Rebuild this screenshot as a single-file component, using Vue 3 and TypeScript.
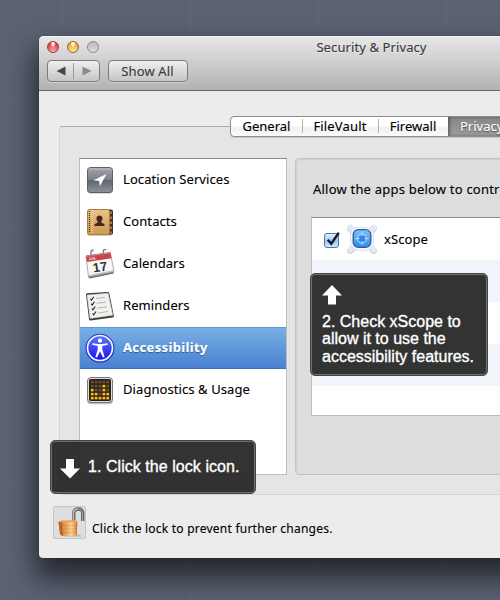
<script setup lang="ts">
interface Service {
  id: string
  label: string
}

const tabs: string[] = ['General', 'FileVault', 'Firewall', 'Privacy']
const activeTab = 'Privacy'

const services: Service[] = [
  { id: 'location', label: 'Location Services' },
  { id: 'contacts', label: 'Contacts' },
  { id: 'calendars', label: 'Calendars' },
  { id: 'reminders', label: 'Reminders' },
  { id: 'accessibility', label: 'Accessibility' },
  { id: 'diagnostics', label: 'Diagnostics & Usage' },
]
const selected = 'accessibility'

// Lit cells per row of the diagnostics display, top to bottom.
const litCells: number[][] = [
  [],
  [3],
  [0, 3],
  [0, 1, 3, 4],
  [0, 1, 2, 3, 4],
]
</script>

<template>
  <main class="desktop">
    <section class="window">
      <header class="toolbar">
        <div class="titlebar">
          <div class="lights">
            <i class="light red"></i><i class="light yellow"></i><i class="light off"></i>
          </div>
          <h1 class="title">Security &amp; Privacy</h1>
        </div>
        <div class="buttons">
          <div class="nav">
            <span class="nav-cell"><svg width="10" height="10" viewBox="0 0 10 10"><path d="M9.500 .5v9L.5 5z" fill="#474747" /></svg></span>
            <span class="nav-cell"><svg width="10" height="10" viewBox="0 0 10 10"><path d="M.5 .5v9l9-4.500z" fill="#8c8c8c" /></svg></span>
          </div>
          <button class="show-all">Show All</button>
        </div>
      </header>

      <div class="pane">
        <nav class="tabs">
          <span v-for="t in tabs" :key="t" class="tab" :class="[t.toLowerCase(), { active: t === activeTab }]">{{ t }}</span>
        </nav>
        <div class="columns">
          <ul class="services">
            <li v-for="s in services" :key="s.id" class="service" :class="{ selected: s.id === selected }">
              <svg v-if="s.id === 'location'" class="icon" viewBox="0 0 30 30">
                <defs>
                  <linearGradient id="loc" x2="0" y2="1"><stop offset="0" stop-color="#a3a6ab" /><stop offset=".5" stop-color="#7b7f86" /><stop offset=".52" stop-color="#60656e" /><stop offset="1" stop-color="#8d9199" /></linearGradient>
                </defs>
                <rect x="2" y="2.8" width="26" height="26" rx="3.5" fill="#000" opacity=".2" />
                <rect x="2.5" y="2.5" width="25" height="25" rx="3" fill="url(#loc)" stroke="#5d6066" />
                <path d="M3.5 4h23" stroke="#c9cbce" opacity=".7" />
                <path d="M21.5 9 8.5 15.2l5.6.8.8 5.3z" fill="#fff" />
              </svg>
              <svg v-else-if="s.id === 'contacts'" class="icon" viewBox="0 0 30 30">
                <defs><linearGradient id="con" x2="0" y2="1"><stop offset="0" stop-color="#e7c48a" /><stop offset="1" stop-color="#cf9a4e" /></linearGradient></defs>
                <rect x="2" y="2.8" width="26" height="26" rx="2.5" fill="#000" opacity=".25" />
                <rect x="22" y="2.5" width="6" height="25" rx="2" fill="#4b2f1c" />
                <path d="M26 4.500v22" stroke="#a5794a" stroke-width="2" stroke-dasharray="2.500 2.500" />
                <rect x="2.5" y="2.5" width="22" height="25" rx="2" fill="url(#con)" stroke="#a87a3c" />
                <path d="M4.5 4v22" stroke="#4d3417" stroke-width="1.300" stroke-dasharray="1 1" />
                <path d="M7 3v24" stroke="#efd5a6" stroke-width=".8" />
                <path d="M9.500 19v-1.500c0-1.200 3.400-1.200 3.400-2.600-2.300-2.600-1.800-6.400 1.600-6.400s3.900 3.800 1.600 6.400c0 1.400 3.400 1.400 3.400 2.600V19z" fill="#4b2717" />
              </svg>
              <svg v-else-if="s.id === 'calendars'" class="icon" viewBox="0 0 30 30">
                <path d="M3 27.500 28.500 22.800V24.500L4.500 29.500z" fill="#555" />
                <path d="M1 7 25.300 3.600 29 22.500 3.500 27.800z" fill="#f8f8f8" stroke="#8b8b8b" stroke-width=".7" />
                <path d="M4 28.300 28.700 23.300M3.600 26.800 28 21.700" stroke="#a5a5a5" stroke-width=".7" />
                <path d="M.8 6.800 25.300 3.300 26.600 9.300 2 13z" fill="#cf4148" />
                <path d="M1 7.200 25.300 3.800" stroke="#e68286" />
                <text x="3.700" y="11.200" class="cal-month" transform="rotate(-8 4 11)">JUL</text>
                <path d="M6 9.500V2.300q1.300-2.200 2.400 0M18.500 7.800V1.300q1.300-2.200 2.400 0" stroke="#777" stroke-width="1.300" fill="none" />
                <text x="8.500" y="23.500" class="cal-day" transform="rotate(-9 9 24)">17</text>
              </svg>
              <svg v-else-if="s.id === 'reminders'" class="icon" viewBox="0 0 30 30">
                <path d="M1 3.600Q1 2.400 2.200 2.200L22.500.900Q24 .8 24.300 2.200L28.900 25Q29.100 26.400 27.500 26.600L5.700 29.500Q4.300 29.600 4 28.300z" fill="#393939" />
                <path d="M2 4 23.200 2.200 27.800 24.300 5.100 27.400z" fill="#f1f1ed" stroke="#c9c9c9" stroke-width=".6" />
                <path d="M11 7.500 20 6.500M11.700 12.300 21 11.100M12.400 17.100 22 15.800M13.200 22 23 20.500" stroke="#b5b5b5" stroke-width="1" />
                <path d="m5.300 7.800 1.200 1.300 2.300-3.300M6 12.700l1.200 1.300 2.300-3.300M6.700 17.500l1.200 1.300 2.300-3.300M7.500 22.500l1.200 1.300 2.300-3.300" stroke="#222" stroke-width="1.100" fill="none" />
              </svg>
              <svg v-else-if="s.id === 'accessibility'" class="icon" viewBox="0 0 30 30">
                <defs><linearGradient id="acc" x2="0" y2="1"><stop offset="0" stop-color="#5d7bf5" /><stop offset="1" stop-color="#1a0df0" /></linearGradient></defs>
                <circle cx="15" cy="15.300" r="14.500" fill="#1e36cf" />
                <circle cx="15" cy="15" r="12.500" fill="url(#acc)" stroke="#f2f5ff" stroke-width="1.700" />
                <circle cx="15" cy="7.700" r="2.100" fill="#fff" />
                <path d="M7.500 10.300 13 11h4l5.500-.7.300 1.500-5.500 1.300v3.500L19.600 24l-1.600.6L15 18.300 12 24.600 10.400 24l2.300-7.400v-3.500L7.200 11.800z" fill="#fff" />
              </svg>
              <svg v-else class="icon" viewBox="0 0 30 30">
                <rect x="2" y="3.300" width="26" height="26" rx="4" fill="#000" opacity=".25" />
                <rect x="2.500" y="2.500" width="25" height="25" rx="3.500" fill="#ddd" stroke="#777" />
                <rect x="4" y="4" width="22" height="22" rx="2" fill="#2b211b" />
                <g v-for="(row, y) in litCells" :key="y">
                  <rect v-for="x in 5" :key="x" :x="1.900 + x * 3.900" :y="5.800 + y * 4" width="2.800" height="2.600" :fill="row.includes(x - 1) ? '#ffb91c' : '#6b522a'" />
                </g>
              </svg>
              <span class="label">{{ s.label }}</span>
            </li>
          </ul>

          <div class="detail">
            <p class="hint">Allow the apps below to control your computer.</p>
            <div class="apps">
              <div class="app">
                <span class="checkbox">
                  <svg width="18" height="18" viewBox="0 0 18 18"><path d="M3.800 7.700 7.300 11.800 14.800 .8" fill="none" stroke="#101a38" stroke-width="2.400" /></svg>
                </span>
                <svg class="xscope" viewBox="0 0 32 32">
                  <path d="M4.300 5.500 10 11.200M27.700 5.500 22 11.200M4.300 27.700 10 22M27.700 27.700 22 22" stroke="#bfc6d6" stroke-width="6.400" stroke-linecap="round" />
                  <path d="M4.300 4.600 10 10.300M27.700 4.600 22 10.300M4.300 27 10 21.300M27.700 27 22 21.300" stroke="#e4e8f4" stroke-width="6" stroke-linecap="round" />
                  <defs>
                    <linearGradient id="xs" x2="0" y2="1"><stop offset="0" stop-color="#7cc2fa" /><stop offset="1" stop-color="#238cf3" /></linearGradient>
                  </defs>
                  <rect x="4.500" y="4.300" width="23" height="23" rx="8" fill="#f5f7fc" stroke="#d6dbe8" stroke-width=".8" />
                  <rect x="7.200" y="6.700" width="17.600" height="17.600" rx="5" fill="url(#xs)" stroke="#3b5690" stroke-width="1.300" />
                  <circle cx="16" cy="15.500" r="4.800" fill="none" stroke="#b5daff" stroke-width=".9" />
                  <circle cx="16" cy="15.500" r="3" fill="#3b7fe9" />
                  <path d="M16 8.700v4.300M16 18v4.300M9.200 15.500h4.300M18.500 15.500h4.300" stroke="#b5daff" stroke-width=".9" />
                </svg>
                <span class="app-name">xScope</span>
              </div>
              <div class="app"></div><div class="app"></div><div class="app"></div><div class="app"></div>
            </div>
          </div>
        </div>
      </div>

      <footer class="footer">
        <span class="lock">
          <svg width="33" height="33" viewBox="0 0 33 33">
            <defs>
              <linearGradient id="body"><stop offset="0" stop-color="#d98b42" /><stop offset=".3" stop-color="#eba75a" /><stop offset=".6" stop-color="#f9d49d" /><stop offset=".85" stop-color="#eba254" /><stop offset="1" stop-color="#bd6b22" /></linearGradient>
            </defs>
            <path d="M9 30.500h21l-5-2.500z" fill="#000" opacity=".15" />
            <path d="M20.700 16V8q0-5 4.600-5t4.400 5v7" fill="none" stroke="#5c5c5c" stroke-width="3.400" />
            <path d="M20.400 16V8q0-5 4.800-5" fill="none" stroke="#c4c4c4" stroke-width="1.500" />
            <path d="M25.200 3q4.300 0 4.300 5v7" fill="none" stroke="#a5a5a5" stroke-width="1.200" />
            <path d="M5.500 16 9 14.500 10 30 7.500 28.800z" fill="#a3541f" />
            <path d="M5.500 16h4.500v14L7 28.300z" fill="#b8642a" />
            <path d="M9.300 16H24.300l-.5 13.300L9.800 30z" fill="url(#body)" />
            <path d="M9.500 19.500h14.600M9.500 23h14.500M9.700 26.500h14.200" stroke="#bb6b2c" stroke-width=".6" opacity=".5" />
            <path d="M5.500 16.200 9.500 14.300h14l.800 1.900z" fill="#e5a661" />
          </svg>
        </span>
        <span class="lock-text">Click the lock to prevent further changes.</span>
      </footer>
    </section>

    <aside class="tip tip-lock">
      <svg width="20" height="20" viewBox="0 0 20 20"><path d="M6 0h8v9.500h6L10 19.500 0 9.500h6z" fill="#fff" /></svg>
      <span>1. Click the lock icon.</span>
    </aside>
    <aside class="tip tip-check">
      <svg width="20" height="20" viewBox="0 0 20 20"><path d="M10 0 20 10.500h-6V19.500H6v-9H0z" fill="#fff" /></svg>
      <p>2. Check xScope to<br>allow it to use the<br>accessibility features.</p>
    </aside>
  </main>
</template>

<style>
body {
  margin: 0;
  overflow: hidden;
}
</style>

<style scoped>
.desktop {
  position: relative;
  box-sizing: border-box;
  width: 500px;
  height: 600px;
  padding: 36px 0 0 39px;
  overflow: hidden;
  background:
    repeating-linear-gradient(90deg, transparent 0 62px, rgba(255, 255, 255, .03) 62px 63px, transparent 63px 128px),
    repeating-linear-gradient(transparent 0 98px, rgba(255, 255, 255, .025) 98px 99px, transparent 99px 128px),
    #5b6273;
  font: 13px/18px "Noto Sans", "Liberation Sans", sans-serif;
  color: #000;
}
.window {
  width: 668px;
  height: 522px;
  border-radius: 5px 5px 4px 4px;
  background: #ececec;
  box-shadow: 0 0 1px rgba(0, 0, 0, .5), 0 16px 28px 4px rgba(0, 0, 0, .6);
  -webkit-text-stroke: .12px currentColor;
}
.toolbar {
  box-sizing: border-box;
  height: 55px;
  border-radius: 5px 5px 0 0;
  border-bottom: 1px solid #686868;
  background: linear-gradient(#e8e8e8, #b2b2b2);
  box-shadow: inset 0 1px #f5f5f5;
}
.titlebar {
  display: flex;
  height: 22px;
  align-items: center;
}
.lights {
  display: flex;
  gap: 8px;
  width: 60px;
  padding-left: 8px;
}
.light {
  box-sizing: border-box;
  width: 12px;
  height: 12px;
  border-radius: 50%;
  border: 1px solid;
}
.red {
  border-color: #953f43;
  background: radial-gradient(ellipse at 50% 12%, #ffe4e4 0 15%, transparent 38%), radial-gradient(circle at 50% 95%, #ffb1ad, #df3940 75%);
}
.yellow {
  border-color: #94692f;
  background: radial-gradient(ellipse at 50% 12%, #fff5dd 0 15%, transparent 38%), radial-gradient(circle at 50% 95%, #ffef9a, #e5a23a 75%);
}
.off {
  border-color: #8c8c8c;
  background: linear-gradient(#b8b8b8, #dedede);
}
.title {
  flex: 1;
  margin: 0 71px 0 0;
  font-size: 13px;
  font-weight: 400;
  line-height: 22px;
  letter-spacing: .1px;
  text-align: center;
  color: #3a3a3a;
  text-shadow: 0 1px rgba(255, 255, 255, .5);
}
.buttons {
  display: flex;
  gap: 8px;
  padding: 2px 0 0 8px;
}
.nav,
.show-all {
  box-sizing: border-box;
  height: 22px;
  border: 1px solid #7c7c7c;
  border-radius: 4px;
  background: linear-gradient(#efefef, #c5c5c5);
  box-shadow: 0 1px rgba(255, 255, 255, .3);
}
.nav {
  display: flex;
  width: 53px;
}
.nav-cell {
  display: flex;
  flex: 1;
  align-items: center;
  justify-content: center;
}
.nav-cell + .nav-cell {
  margin: 2px 0;
  border-left: 1px solid #9c9c9c;
}
.show-all {
  width: 80px;
  padding: 0 1px 0 0;
  font: inherit;
  line-height: 20px;
  letter-spacing: .15px;
  color: #3a3a3a;
}
.pane {
  box-sizing: border-box;
  height: 369px;
  margin: 35px 20px 0 20px;
  border: 1px solid #d3d3d3;
  border-top-color: #aaa;
  border-radius: 4px;
  background: #e5e5e5;
}
.tabs {
  display: flex;
  box-sizing: border-box;
  width: 285px;
  height: 21px;
  margin: -11px 0 0 170px;
  border: 1px solid #8c8c8c;
  border-radius: 4px;
  background: linear-gradient(#fff 0 48%, #f0f0f0 52%, #fafafa);
  box-shadow: 0 1px rgba(0, 0, 0, .12);
}
.tab {
  box-sizing: border-box;
  height: 19px;
  line-height: 19px;
  text-align: center;
}
.general { width: 71px; }
.filevault {
  width: 76px;
  letter-spacing: .15px;
}
.firewall { width: 70px; }
.filevault,
.firewall {
  background: linear-gradient(#b5b5b5, #b5b5b5) 0 2px / 1px 14px no-repeat;
}
.active {
  flex: 1;
  padding-left: 12px;
  text-align: left;
  color: #fff;
  background: linear-gradient(#858585, #9d9d9d);
  box-shadow: inset 2px 0 3px rgba(0, 0, 0, .35);
  text-shadow: 0 1px 1px rgba(0, 0, 0, .5);
}
.columns {
  display: flex;
  gap: 8px;
  padding: 21px 19px 0;
}
.services {
  box-sizing: border-box;
  width: 208px;
  height: 317px;
  margin: 0;
  padding: 0;
  border: 1px solid #bcbcbc;
  border-top-color: #8c8c8c;
  background: #fff;
  list-style: none;
}
.service {
  display: flex;
  align-items: center;
  height: 42px;
  padding-left: 5px;
  letter-spacing: .08px;
}
.icon {
  width: 30px;
  height: 30px;
}
.label {
  margin-left: 8px;
  padding-bottom: 3px;
}
.selected {
  color: #fff;
  font-weight: 700;
  letter-spacing: .37px;
  background: linear-gradient(#5c9dd6 0 1px, #78afe4 1px, #4981d1 41px, #3e72bd 41px);
  text-shadow: 0 1px 1px rgba(20, 50, 110, .6);
}
.cal-month {
  font: 700 4px "Liberation Sans", sans-serif;
  fill: #fff;
}
.cal-day {
  font: 700 13px "Liberation Sans", sans-serif;
  fill: #333;
}
.detail {
  box-sizing: border-box;
  flex: 1;
  height: 317px;
  padding: 21px 15px 0;
  border: 1px solid #c2c2c2;
  border-radius: 4px;
  background: #ddd;
  box-shadow: inset 1px 1px 1px rgba(0, 0, 0, .06);
}
.hint {
  margin: 0 0 19px 2px;
  letter-spacing: .21px;
  white-space: nowrap;
}
.apps {
  height: 197px;
  overflow: hidden;
  border: 1px solid #bcbcbc;
  border-top-color: #8c8c8c;
  background: #fff;
}
.app {
  display: flex;
  align-items: center;
  height: 42px;
}
.app:nth-child(even) {
  background: #f1f5fb;
}
.checkbox {
  box-sizing: border-box;
  width: 15px;
  height: 15px;
  margin: 2px 7px 0 12px;
  border: 1px solid #57719f;
  border-radius: 3px;
  background: linear-gradient(#e6f0fc, #9ec6f0 55%, #cdeaff);
}
.checkbox svg {
  display: block;
  margin: -2px 0 0 -1px;
}
.xscope {
  width: 32px;
  height: 32px;
}
.app-name {
  margin-left: 6px;
  letter-spacing: .1px;
}
.footer {
  display: flex;
  padding: 11px 0 0 14px;
}
.lock {
  box-sizing: border-box;
  width: 33px;
  height: 33px;
  border: 1px solid #c5c5c5;
  border-radius: 2px;
  background: #dedede;
}
.lock svg {
  display: block;
  margin: -1px;
}
.lock-text {
  margin: 14px 0 0 6px;
  font-size: 12px;
  letter-spacing: .23px;
}
.tip {
  position: absolute;
  box-sizing: border-box;
  border: 1px solid #464646;
  border-radius: 5px;
  background: rgba(35, 35, 35, .93);
  background-clip: padding-box;
  box-shadow: inset 0 0 0 1px #6d6d6d;
  color: #fff;
  font: 16px/17px "Liberation Sans", sans-serif;
  -webkit-text-stroke: .35px #fff;
}
.tip-lock {
  left: 50px;
  top: 440px;
  display: flex;
  width: 206px;
  height: 54px;
  padding: 17px 0 0 9px;
}
.tip-lock svg {
  margin-top: 1px;
}
.tip-lock span {
  margin-left: 8px;
  letter-spacing: .05px;
}
.tip-check {
  left: 310px;
  top: 273px;
  width: 178px;
  height: 103px;
  padding: 11px 0 0 11px;
}
.tip-check svg {
  display: block;
}
.tip-check p {
  margin: 8px 0 0;
  line-height: 17.4px;
  white-space: nowrap;
}
</style>
